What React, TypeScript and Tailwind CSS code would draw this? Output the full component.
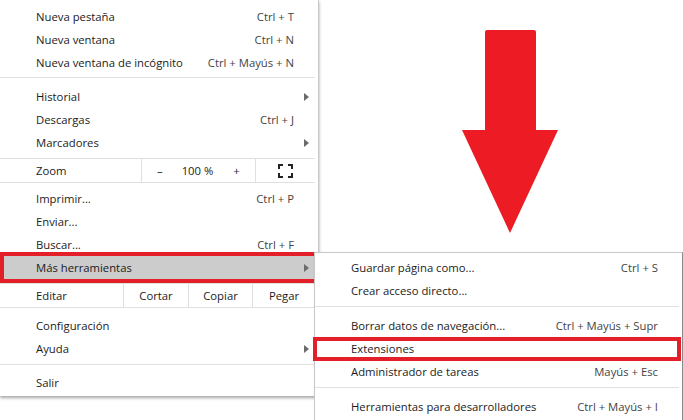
const font = "font-['Open_Sans','Noto_Sans',sans-serif]";

function SubArrow() {
  return (
    <svg width="5" height="8" viewBox="0 0 5 8" className="block">
      <path d="M0 0 L5 4 L0 8 Z" fill="#6b6b6b" />
    </svg>
  );
}

function Item({
  label,
  shortcut,
  sub,
  className = "",
}: {
  label: string;
  shortcut?: string;
  sub?: boolean;
  className?: string;
}) {
  return (
    <div className={`relative flex h-[23px] items-center pl-[36px] ${className}`}>
      <span className="flex-1 whitespace-nowrap text-[#1b1b1b]">{label}</span>
      {shortcut && <span className="whitespace-nowrap text-[#444]">{shortcut}</span>}
      <span className="flex w-[24px] justify-end pr-[9px]">{sub && <SubArrow />}</span>
    </div>
  );
}

function Sep({ className = "" }: { className?: string }) {
  return <div className={`mr-[3px] h-px bg-[#e0e0e0] ${className}`} />;
}

function FullscreenIcon() {
  return (
    <svg width="15" height="14" viewBox="0 0 15 14" className="block">
      <path
        d="M1 5 V1 H5 M10 1 H14 V5 M14 9 V13 H10 M5 13 H1 V9"
        fill="none"
        stroke="#222"
        strokeWidth="2"
      />
    </svg>
  );
}

function MainMenu() {
  return (
    <div className="w-[319px] border-r border-[#c8c8c8] bg-white pt-[5px] pb-[2px] shadow-[0_2px_3px_rgba(0,0,0,0.35)]">
      <Item label="Nueva pestaña" shortcut="Ctrl + T" />
      <Item label="Nueva ventana" shortcut="Ctrl + N" />
      <Item label="Nueva ventana de incógnito" shortcut="Ctrl + Mayús + N" />
      <Sep className="mt-[3px] mb-[7px]" />
      <Item label="Historial" sub />
      <Item label="Descargas" shortcut="Ctrl + J" />
      <Item label="Marcadores" sub />
      <Sep className="mt-[4px]" />
      <div className="mr-[3px] flex h-[24px] items-center border-b border-[#e0e0e0]">
        <span className="w-[141px] pl-[36px] text-[#1b1b1b]">Zoom</span>
        <div className="flex h-full w-[114px] items-center whitespace-nowrap border-l border-[#e0e0e0] text-[#1b1b1b]">
          <span className="ml-[15px]">–</span>
          <span className="ml-[19px]">100 %</span>
          <span className="ml-[20px]">+</span>
        </div>
        <div className="flex h-full flex-1 items-center justify-center border-l border-[#e0e0e0]">
          <FullscreenIcon />
        </div>
      </div>
      <div className="h-[4px]" />
      <Item label="Imprimir..." shortcut="Ctrl + P" />
      <Item label="Enviar..." />
      <Item label="Buscar..." shortcut="Ctrl + F" />
      <div className="relative">
        <Item label="Más herramientas" sub className="bg-[#cccccc]" />
        <div className="absolute -top-[4px] -bottom-[4px] left-0 -right-[1px] border-4 border-[#e3202a]" />
      </div>
      <div className="h-[4px]" />
      <div className="mr-[3px] flex h-[25px] items-center border-y border-[#e0e0e0] text-[#1b1b1b]">
        <span className="w-[123px] pl-[36px]">Editar</span>
        <span className="flex h-full w-[65px] items-center justify-center border-l border-[#e0e0e0]">Cortar</span>
        <span className="flex h-full w-[64px] items-center justify-center border-l border-[#e0e0e0]">Copiar</span>
        <span className="flex h-full flex-1 items-center justify-center border-l border-[#e0e0e0]">Pegar</span>
      </div>
      <div className="h-[6px]" />
      <Item label="Configuración" />
      <Item label="Ayuda" sub />
      <Sep className="mt-[4px] mb-[6px]" />
      <Item label="Salir" />
    </div>
  );
}

function SubMenu() {
  return (
    <div className="absolute left-[314px] top-[252px] w-[369px] border border-[#c8c8c8] border-r-[#8a8a8a] bg-white pt-[3px] shadow-[2px_2px_3px_rgba(0,0,0,0.3)]">
      <Item label="Guardar página como..." shortcut="Ctrl + S" />
      <Item label="Crear acceso directo..." />
      <Sep className="mt-[4px] mb-[7px]" />
      <Item label="Borrar datos de navegación..." shortcut="Ctrl + Mayús + Supr" />
      <div className="relative">
        <Item label="Extensiones" />
        <div className="absolute -left-[2px] right-[1px] top-0 -bottom-[1px] border-4 border-[#e3202a]" />
      </div>
      <Item label="Administrador de tareas" shortcut="Mayús + Esc" />
      <Sep className="mt-[4px] mb-[7px]" />
      <Item label="Herramientas para desarrolladores" shortcut="Ctrl + Mayús + I" />
      <div className="h-[4px]" />
    </div>
  );
}

function BigArrow() {
  return (
    <svg
      width="100"
      height="210"
      viewBox="460 28 100 210"
      className="absolute left-[460px] top-[28px]"
    >
      <path
        d="M487 30 H534 Q536 30 536 32 V130 H558 L510 233 L462 130 H485 V32 Q485 30 487 30 Z"
        fill="#ed1c24"
      />
    </svg>
  );
}

export default function App() {
  return (
    <div className={`relative h-[420px] w-[683px] overflow-hidden bg-white text-[11.3px] leading-none ${font}`}>
      <MainMenu />
      <SubMenu />
      <BigArrow />
    </div>
  );
}
